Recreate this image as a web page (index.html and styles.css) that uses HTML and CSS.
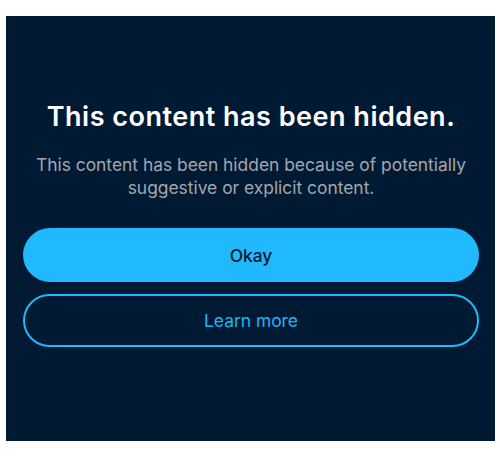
FILE: index.html
```html
<!DOCTYPE html>
<html lang="en">
<head>
<meta charset="utf-8">
<link rel="stylesheet" href="styles.css">
</head>
<body>
<div class="panel">
  <h1 class="title">This content has been hidden.</h1>
  <p class="desc">This content has been hidden because of potentially suggestive or explicit content.</p>
  <div class="actions">
    <button class="btn btn-primary">Okay</button>
    <button class="btn btn-outline">Learn more</button>
  </div>
</div>
</body>
</html>
```
FILE: styles.css
```css
html, body {
  margin: 0;
  padding: 0;
  background: #ffffff;
}
body {
  padding: 16px 5px 17px 6px;
  font-family: Inter, "Noto Sans", sans-serif;
}
.panel {
  width: 489px;
  height: 425px;
  box-sizing: border-box;
  background: #011a33;
  padding: 86px 16px 0 17px;
  display: flex;
  flex-direction: column;
  align-items: stretch;
}
.title {
  margin: 0;
  font-size: 27px;
  line-height: 30px;
  font-weight: 600;
  color: #ffffff;
  text-align: center;
  letter-spacing: 0.5px;
}
.desc {
  margin: 21px 0 0;
  font-size: 17.4px;
  line-height: 23px;
  color: #a3a6ad;
  text-align: center;
}
.actions {
  margin-top: 29px;
  display: flex;
  flex-direction: column;
  gap: 12px;
}
.btn {
  font-family: Inter, "Noto Sans", sans-serif;
  font-size: 17.4px;
  height: 54px;
  border-radius: 27px;
  display: flex;
  align-items: center;
  justify-content: center;
  box-sizing: border-box;
  cursor: pointer;
}
.btn-primary {
  background: #20b9fd;
  border: none;
  color: #06182e;
  font-weight: 500;
}
.btn-outline {
  height: 53px;
  background: transparent;
  border: 2px solid #20b9fd;
  color: #20b4f4;
  font-weight: 400;
}
```
